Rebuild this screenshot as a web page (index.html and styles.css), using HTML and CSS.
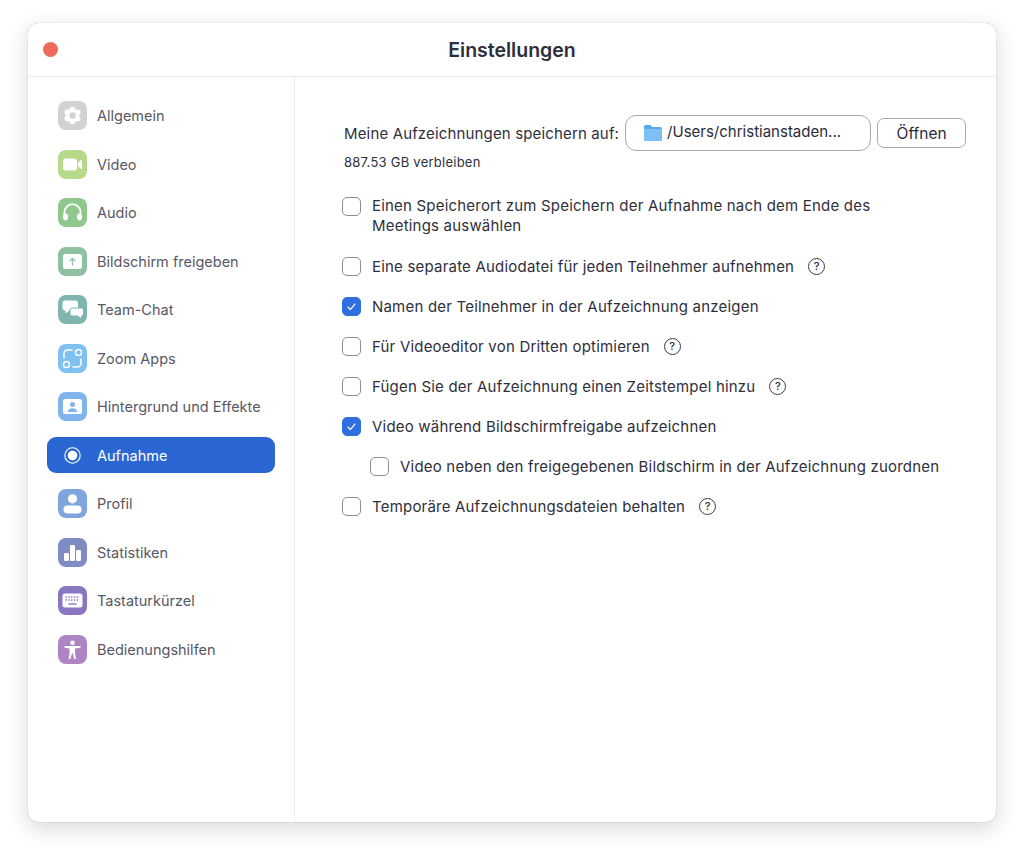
FILE: index.html
```html
<!DOCTYPE html>
<html lang="de">
<head>
<meta charset="utf-8">
<title>Einstellungen</title>
<link rel="stylesheet" href="styles.css">
</head>
<body>
<div class="window">
  <header class="titlebar">
    <span class="close"></span>
    <h1 class="title">Einstellungen</h1>
  </header>
  <div class="main">
    <nav class="sidebar">
      <div class="nav-item"><span class="icon i-general"><svg viewBox="0 0 29 29"><g fill="#fff"><circle cx="14.500" cy="8.700" r="3"/><circle cx="14.500" cy="20.300" r="3"/><circle cx="9.500" cy="11.600" r="3"/><circle cx="19.500" cy="11.600" r="3"/><circle cx="9.500" cy="17.400" r="3"/><circle cx="19.500" cy="17.400" r="3"/><circle cx="14.500" cy="14.500" r="6"/></g><circle cx="14.500" cy="14.500" r="3.200" fill="#d2d2d2"/></svg></span><span>Allgemein</span></div>
      <div class="nav-item"><span class="icon i-video"><svg viewBox="0 0 29 29"><rect x="5" y="8.500" width="14" height="12" rx="3" fill="#fff"/><path fill="#fff" d="M20 13l3.200-2.900c.4-.3.800-.1.800.4v8c0 .5-.4.700-.8.400L20 16z"/></svg></span><span>Video</span></div>
      <div class="nav-item"><span class="icon i-audio"><svg viewBox="0 0 29 29"><path fill="none" stroke="#fff" stroke-width="1.800" d="M6.500 18v-3.800a8 8 0 0 1 16 0V18"/><rect x="5" y="15.500" width="5" height="7" rx="2.400" fill="#fff"/><rect x="19" y="15.500" width="5" height="7" rx="2.400" fill="#fff"/></svg></span><span>Audio</span></div>
      <div class="nav-item"><span class="icon i-share"><svg viewBox="0 0 29 29"><rect x="5" y="7" width="19" height="15" rx="2.500" fill="#fff"/><path fill="none" stroke="#8fc1a0" stroke-width="1.200" d="M14.500 18.500v-7M11.800 14l2.700-2.700 2.700 2.700"/></svg></span><span>Bildschirm freigeben</span></div>
      <div class="nav-item"><span class="icon i-chat"><svg viewBox="0 0 29 29"><path fill="#fff" d="M7 5.500h10.500A2.500 2.500 0 0 1 20 8v5a2.500 2.500 0 0 1-2.500 2.500H11.500L7.500 18.500v-3A2.500 2.500 0 0 1 4.500 13V8A2.500 2.500 0 0 1 7 5.500z"/><path fill="#fff" stroke="#7fb5ac" d="M14 13h9.500a2 2 0 0 1 2 2v4a2 2 0 0 1-2 2v3l-3.800-3H14a2 2 0 0 1-2-2v-4a2 2 0 0 1 2-2z"/></svg></span><span>Team-Chat</span></div>
      <div class="nav-item"><span class="icon i-apps"><svg viewBox="0 0 29 29" fill="none" stroke="#fff" stroke-width="1.500"><circle cx="20.500" cy="8.500" r="3"/><circle cx="8.500" cy="20.500" r="3"/><path stroke-linecap="round" d="M6 14V9.500A3.500 3.500 0 0 1 9.500 6H14M23 15v4.500a3.500 3.500 0 0 1-3.500 3.500H15"/></svg></span><span>Zoom Apps</span></div>
      <div class="nav-item"><span class="icon i-bg"><svg viewBox="0 0 29 29"><rect x="5" y="7" width="19" height="15" rx="2.500" fill="#fff"/><circle cx="14.500" cy="12.500" r="2.500" fill="#82b4ec"/><path fill="#82b4ec" d="M9.800 20c0-2.500 2-3.800 4.700-3.800s4.700 1.300 4.700 3.800z"/></svg></span><span>Hintergrund und Effekte</span></div>
      <div class="nav-item active"><span class="icon i-rec"><svg viewBox="0 0 29 29"><circle cx="14.500" cy="14.500" r="7.700" fill="none" stroke="#fff" stroke-width="1.100"/><circle cx="14.500" cy="14.500" r="4.800" fill="#fff"/></svg></span><span>Aufnahme</span></div>
      <div class="nav-item"><span class="icon i-profile"><svg viewBox="0 0 29 29"><circle cx="14.500" cy="9.800" r="4.600" fill="#fff"/><rect x="5.500" y="16.500" width="18" height="8" rx="4" fill="#fff"/></svg></span><span>Profil</span></div>
      <div class="nav-item"><span class="icon i-stats"><svg viewBox="0 0 29 29" fill="#fff"><rect x="6" y="15" width="5" height="8" rx="1.200"/><rect x="12" y="7" width="5" height="16" rx="1.200"/><rect x="18" y="12" width="5" height="11" rx="1.200"/></svg></span><span>Statistiken</span></div>
      <div class="nav-item"><span class="icon i-keys"><svg viewBox="0 0 29 29"><rect x="4.500" y="7.500" width="20" height="14" rx="2.500" fill="#fff"/><path stroke="#8a76c0" stroke-width="1.400" stroke-dasharray="1.400 1.400" d="M7.500 11h14M7.500 14h14"/><path stroke="#8a76c0" stroke-width="1.400" d="M10.500 18h8"/></svg></span><span>Tastaturkürzel</span></div>
      <div class="nav-item"><span class="icon i-access"><svg viewBox="0 0 29 29"><circle cx="14.500" cy="7.800" r="2.300" fill="#fff"/><path fill="#fff" d="M6.500 11h16v1.800l-5.500.7v4l1 6.500h-1.800l-1.700-6h-.400l-1.700 6h-1.800l1-6.500v-4l-5.100-.7z"/></svg></span><span>Bedienungshilfen</span></div>
    </nav>
    <section class="content">
      <div class="path-row">
        <span class="path-label">Meine Aufzeichnungen speichern auf:</span>
        <div class="path-box"><svg class="folder" viewBox="0 0 18 16"><path fill="#5aa9ea" d="M1.500 0h5l1.500 2h8.500A1.500 1.500 0 0 1 18 3.500v11a1.500 1.500 0 0 1-1.500 1.500h-15A1.500 1.500 0 0 1 0 14.500v-13A1.500 1.500 0 0 1 1.500 0z"/><path fill="#7cc0f5" d="M0 4h18v10.500a1.500 1.500 0 0 1-1.500 1.500h-15A1.500 1.500 0 0 1 0 14.500z"/></svg><span>/Users/christianstaden...</span></div>
        <div class="open-btn">Öffnen</div>
      </div>
      <p class="free">887.53 GB verbleiben</p>
      <ul class="options">
        <li class="option two-line"><span class="check"></span><span>Einen Speicherort zum Speichern der Aufnahme nach dem Ende des<br>Meetings auswählen</span></li>
        <li class="option"><span class="check"></span><span>Eine separate Audiodatei für jeden Teilnehmer aufnehmen</span><span class="help">?</span></li>
        <li class="option"><span class="check on"><svg viewBox="0 0 18 18"><path fill="none" stroke="#fff" stroke-width="1.300" d="M5 9.300l2.800 3L13 6"/></svg></span><span>Namen der Teilnehmer in der Aufzeichnung anzeigen</span></li>
        <li class="option"><span class="check"></span><span>Für Videoeditor von Dritten optimieren</span><span class="help">?</span></li>
        <li class="option"><span class="check"></span><span>Fügen Sie der Aufzeichnung einen Zeitstempel hinzu</span><span class="help">?</span></li>
        <li class="option"><span class="check on"><svg viewBox="0 0 18 18"><path fill="none" stroke="#fff" stroke-width="1.300" d="M5 9.300l2.800 3L13 6"/></svg></span><span>Video während Bildschirmfreigabe aufzeichnen</span></li>
        <li class="option nested"><span class="check"></span><span>Video neben den freigegebenen Bildschirm in der Aufzeichnung zuordnen</span></li>
        <li class="option"><span class="check"></span><span>Temporäre Aufzeichnungsdateien behalten</span><span class="help">?</span></li>
      </ul>
    </section>
  </div>
</div>
</body>
</html>
```
FILE: styles.css
```css
* { box-sizing: border-box; }
html, body { margin: 0; height: 100%; }
body {
  background: #fff;
  padding: 23px 28px 33px;
  font-family: Inter, "Liberation Sans", sans-serif;
  color: #2b2b3a;
  overflow: hidden;
}
.window {
  height: 799px;
  background: #fff;
  border-radius: 10px;
  box-shadow: 0 0 1px rgba(0,0,0,.35), 0 6px 22px rgba(0,0,0,.16);
  display: flex;
  flex-direction: column;
  overflow: hidden;
}
.titlebar {
  height: 54px;
  flex: none;
  border-bottom: 1px solid #ebebf0;
  display: flex;
  align-items: center;
  justify-content: center;
  position: relative;
}
.close {
  position: absolute;
  left: 15px;
  top: 19px;
  width: 15px;
  height: 15px;
  border-radius: 50%;
  background: #ee6a5f;
}
.title {
  margin: 0;
  font-size: 19.500px;
  font-weight: 600;
  color: #2e2e3c;
}
.main { flex: 1; display: flex; min-height: 0; }
.sidebar {
  width: 267px;
  flex: none;
  border-right: 1px solid #ebebf0;
  padding: 20.300px 19px 0;
  display: flex;
  flex-direction: column;
  gap: 12px;
}
.nav-item {
  height: 36.500px;
  display: flex;
  align-items: center;
  gap: 10px;
  padding-left: 11px;
  border-radius: 9px;
  font-size: 14.500px;
  color: #585866;
}
.nav-item.active { background: #2b67d3; color: #fff; }
.icon {
  width: 29px;
  height: 29px;
  flex: none;
  border-radius: 8px;
  display: block;
}
.icon svg { display: block; width: 29px; height: 29px; }
.i-general { background: #d2d2d2; }
.i-video { background: #b7d98a; }
.i-audio { background: #8fc78c; }
.i-share { background: #8fc1a0; }
.i-chat { background: #7fb5ac; }
.i-apps { background: #7fc1f0; }
.i-bg { background: #82b4ec; }
.i-profile { background: #7fa6dc; }
.i-stats { background: #7f8cc4; }
.i-keys { background: #8a76c0; }
.i-access { background: #ad85c4; }
.content { flex: 1; padding: 38px 0 0 47px; min-width: 0; }
.path-row { display: flex; align-items: center; }
.path-label { font-size: 15px; letter-spacing: .15px; color: #2f2f3c; white-space: nowrap; margin-left: 2px; }
.path-box {
  width: 246px;
  height: 36px;
  margin-left: 6px;
  border: 1px solid #a9a9ae;
  border-radius: 11px;
  display: flex;
  align-items: center;
  gap: 5px;
  padding: 0 0 4px 18px;
  font-size: 15px;
  color: #2b2b3a;
  flex: none;
}
.folder { width: 18px; height: 16px; flex: none; margin-top: 3px; }
.open-btn {
  width: 89px;
  height: 30px;
  margin-left: 6px;
  border: 1px solid #a9a9ae;
  border-radius: 7px;
  display: flex;
  align-items: center;
  justify-content: center;
  font-size: 15.500px;
  flex: none;
}
.free { margin: 3px 0 0 2px; font-size: 13px; letter-spacing: .25px; line-height: 16px; color: #2f2f3c; }
.options { list-style: none; margin: 25.500px 0 0; padding: 0; display: flex; flex-direction: column; gap: 20px; }
.option {
  display: flex;
  align-items: center;
  gap: 11px;
  font-size: 15px;
  letter-spacing: .2px;
  line-height: 20px;
  min-height: 20px;
  color: #2f2f3c;
  white-space: nowrap;
}
.option.two-line { align-items: flex-start; line-height: 20.500px; }
.option.two-line .check { margin-top: 1px; }
.option.nested { padding-left: 28px; }
.check {
  width: 19px;
  height: 19px;
  flex: none;
  border: 1px solid #8d8d93;
  border-radius: 5px;
  background: #fff;
}
.check.on { background: #2f6fe0; border-color: #2f6fe0; }
.check svg { display: block; width: 17px; height: 17px; }
.help {
  width: 17px;
  height: 17px;
  flex: none;
  margin-left: 3px;
  border: 1.500px solid #3a3a44;
  border-radius: 50%;
  display: flex;
  align-items: center;
  justify-content: center;
  font-size: 11px;
  font-weight: 500;
  letter-spacing: 0;
  line-height: 1;
}
```
